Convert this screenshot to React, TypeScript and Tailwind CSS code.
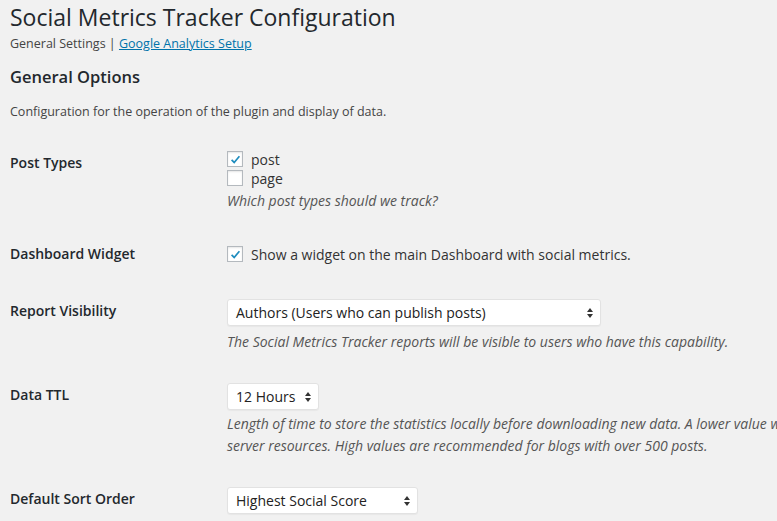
import React from 'react';

const Check = ({ checked }: { checked: boolean }) => (
    <span className="w-[16px] h-[16px] shrink-0 bg-white border border-[#b4b9be] shadow-[inset_0_1px_2px_rgba(0,0,0,0.1)] flex items-center justify-center">
        {checked && (
            <svg width="13" height="13" viewBox="0 0 20 20">
                <path d="M4 10.5 L8 14.5 L16 5" fill="none" stroke="#1e8cbe" strokeWidth="2.6" />
            </svg>
        )}
    </span>
);

const Select = ({ label, width }: { label: string; width: string }) => (
    <div className={`${width} h-[27px] bg-white rounded-[3px] border border-[#e2e2e2] shadow-[0_1px_1px_rgba(0,0,0,0.04)] flex items-center justify-between pl-[8px] pr-[6px] text-[14px] text-[#222]`}>
        <span>{label}</span>
        <svg width="8" height="12" viewBox="0 0 8 12">
            <path d="M4 1 L7 5 L1 5 Z" fill="#333" />
            <path d="M4 11 L7 7 L1 7 Z" fill="#333" />
        </svg>
    </div>
);

const Row = ({ label, children, className, pad = 'pt-[2px]' }: { label: string; children: React.ReactNode; className: string; pad?: string }) => (
    <div className={`flex ${className}`}>
        <div className={`w-[217px] shrink-0 ${pad} text-[14px] leading-[20px] font-semibold text-[#23282d]`}>{label}</div>
        <div className="flex-1 min-w-0">{children}</div>
    </div>
);

const Desc = ({ children }: { children: React.ReactNode }) => (
    <p className="italic text-[14px] leading-[22px] text-[#555] whitespace-nowrap">{children}</p>
);

export default function App() {
    return (
        <div className="w-[777px] h-[521px] overflow-hidden bg-[#f1f1f1] font-['Open_Sans',sans-serif] pl-[10px] text-[#444]">
            <h1 className="text-[23px] leading-[29px] pt-[3px] text-[#23282d]">Social Metrics Tracker Configuration</h1>
            <div className="text-[12.5px] leading-[18px] mt-[3px] text-[#444]">
                General Settings | <a className="text-[#0073aa] underline">Google Analytics Setup</a>
            </div>
            <h2 className="text-[16.5px] leading-[24px] font-semibold text-[#23282d] mt-[12px]">General Options</h2>
            <p className="text-[12.5px] leading-[20px] mt-[13px] text-[#444]">Configuration for the operation of the plugin and display of data.</p>

            <Row label="Post Types" className="mt-[29px]">
                <div className="flex flex-col gap-[3px] text-[14px] text-[#333]">
                    <label className="flex items-center gap-[8px] h-[16px]"><Check checked /> post</label>
                    <label className="flex items-center gap-[8px] h-[16px]"><Check checked={false} /> page</label>
                </div>
                <div className="mt-[4px]"><Desc>Which post types should we track?</Desc></div>
            </Row>

            <Row label="Dashboard Widget" className="mt-[32px]" pad="pt-0">
                <label className="flex items-center gap-[8px] h-[20px] text-[14px] text-[#333] whitespace-nowrap"><Check checked /> Show a widget on the main Dashboard with social metrics.</label>
            </Row>

            <Row label="Report Visibility" className="mt-[35px]">
                <Select label="Authors (Users who can publish posts)" width="w-[374px]" />
                <div className="mt-[5px]"><Desc>The Social Metrics Tracker reports will be visible to users who have this capability.</Desc></div>
            </Row>

            <Row label="Data TTL" className="mt-[30px]">
                <Select label="12 Hours" width="w-[92px]" />
                <div className="mt-[3px]">
                    <Desc>Length of time to store the statistics locally before downloading new data. A lower value will use more<br />server resources. High values are recommended for blogs with over 500 posts.</Desc>
                </div>
            </Row>

            <Row label="Default Sort Order" className="mt-[30px]">
                <Select label="Highest Social Score" width="w-[191px]" />
            </Row>
        </div>
    );
}
